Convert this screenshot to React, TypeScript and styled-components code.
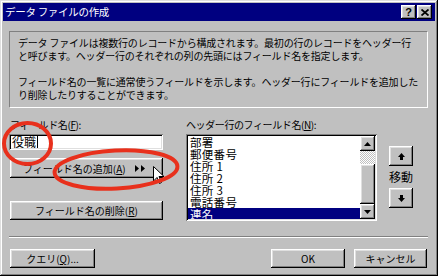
import React from 'react';
import styled, { createGlobalStyle } from 'styled-components';

const GlobalStyle = createGlobalStyle`
  html, body {
    margin: 0;
    padding: 0;
    background: #c0c0c0;
  }
  body {
    font-family: "Noto Sans CJK JP", "Noto Sans", sans-serif;
    color: #000;
  }
`;

const raised = `
  box-shadow: inset -1px -1px #000, inset 1px 1px #fff, inset -2px -2px #808080, inset 2px 2px #dfdfdf;
`;

const sunken = `
  box-shadow: inset 1px 1px #808080, inset -1px -1px #fff, inset 2px 2px #000, inset -2px -2px #dfdfdf;
`;

const listItems = ['部署', '郵便番号', '住所 1', '住所 2', '住所 3', '電話番号', '連名'];

const UpArrow = () => (
    <svg width="7" height="7" viewBox="0 0 7 7">
        <polygon points="3.5,0 7,4 0,4" fill="#000" />
        <rect x="2" y="4" width="3" height="3" fill="#000" />
    </svg>
);

const DownArrow = () => (
    <svg width="7" height="7" viewBox="0 0 7 7">
        <rect x="2" y="0" width="3" height="3" fill="#000" />
        <polygon points="0,3 7,3 3.5,7" fill="#000" />
    </svg>
);

const App = () => {
    return (
        <>
            <GlobalStyle />
            <Window>
                <TitleBar>
                    <TitleText>データ ファイルの作成</TitleText>
                    <TitleButtons>
                        <TitleButton><HelpGlyph>?</HelpGlyph></TitleButton>
                        <TitleButton>
                            <svg width="8" height="7" viewBox="0 0 8 7">
                                <path d="M0.5 0.5 L7.5 6.5 M7.5 0.5 L0.5 6.5" stroke="#000" strokeWidth="1.8" />
                            </svg>
                        </TitleButton>
                    </TitleButtons>
                </TitleBar>

                <Content>
                    <InfoPanel>
                        <InfoLine>データ ファイルは複数行のレコードから構成されます。最初の行のレコードをヘッダー行</InfoLine>
                        <InfoLine>と呼びます。ヘッダー行のそれぞれの列の先頭にはフィールド名を指定します。</InfoLine>
                        <InfoLine>&nbsp;</InfoLine>
                        <InfoLine>フィールド名の一覧に通常使うフィールドを示します。ヘッダー行にフィールドを追加した</InfoLine>
                        <InfoLine>り削除したりすることができます。</InfoLine>
                    </InfoPanel>

                    <Main>
                        <LeftColumn>
                            <FieldLabel>フィールド名(<u>F</u>):</FieldLabel>
                            <TextField>役職<Caret /></TextField>
                            <PushButton $height={20} $mt={8} $align="flex-start">
                                <span>フィールド名の追加(<u>A</u>)</span>
                                <svg width="11" height="7" viewBox="0 0 11 7">
                                    <polygon points="0,0 4,3.5 0,7" fill="#000" />
                                    <polygon points="6,0 10,3.5 6,7" fill="#000" />
                                </svg>
                            </PushButton>
                            <PushButton $height={19} $mt={23}>
                                <span>フィールド名の削除(<u>R</u>)</span>
                            </PushButton>
                        </LeftColumn>

                        <RightColumn>
                            <FieldLabel>ヘッダー行のフィールド名(<u>N</u>):</FieldLabel>
                            <ListBox>
                                <ListItems>
                                    {listItems.map((item, i) => (
                                        <ListItem key={item} $selected={i === listItems.length - 1}>{item}</ListItem>
                                    ))}
                                </ListItems>
                                <ScrollBar>
                                    <ScrollButton><svg width="7" height="4" viewBox="0 0 7 4"><polygon points="3.5,0 7,4 0,4" fill="#000" /></svg></ScrollButton>
                                    <ScrollTrack />
                                    <ScrollThumb />
                                    <ScrollButton><svg width="7" height="4" viewBox="0 0 7 4"><polygon points="0,0 7,0 3.5,4" fill="#000" /></svg></ScrollButton>
                                </ScrollBar>
                            </ListBox>
                        </RightColumn>

                        <MoveColumn>
                            <MoveButton><UpArrow /></MoveButton>
                            <MoveLabel>移動</MoveLabel>
                            <MoveButton><DownArrow /></MoveButton>
                        </MoveColumn>
                    </Main>

                    <Separator />

                    <BottomRow>
                        <DialogButton $width={85}>クエリ(<u>Q</u>)...</DialogButton>
                        <RightButtons>
                            <DialogButton $width={74}>OK</DialogButton>
                            <DialogButton $width={73}>キャンセル</DialogButton>
                        </RightButtons>
                    </BottomRow>
                </Content>

                {/* annotation marks drawn over the dialog */}
                <Overlay width="438" height="276" viewBox="0 0 438 276">
                    <path
                        d="M153.5 166.5 L153.5 181 L157 177.5 L159.5 183.5 L161.5 182.5 L159 176.5 L164 176.5 Z"
                        fill="#fff"
                        stroke="#000"
                        strokeWidth="1"
                    />
                    <ellipse cx="27.5" cy="143.5" rx="23.5" ry="20.5" fill="none" stroke="#e8301c" strokeWidth="4" />
                    <ellipse cx="116" cy="169.5" rx="61.5" ry="19" fill="none" stroke="#e8301c" strokeWidth="4" transform="rotate(-3 116 169.5)" />
                </Overlay>
            </Window>
        </>
    );
};

export default App;

const Window = styled.div`
    position: relative;
    width: 438px;
    height: 276px;
    box-sizing: border-box;
    padding: 3px;
    background: #c0c0c0;
    box-shadow: inset -1px -1px #000, inset 1px 1px #dfdfdf, inset -2px -2px #808080, inset 2px 2px #fff;
    overflow: hidden;
`;

const TitleBar = styled.div`
    height: 18px;
    background: #000080;
    display: flex;
    align-items: center;
    padding: 0 3px 0 2px;
`;

const TitleText = styled.div`
    color: #fff;
    font-size: 10.5px;
    line-height: 18px;
    white-space: nowrap;
    letter-spacing: -0.3px;
`;

const TitleButtons = styled.div`
    margin-left: auto;
    display: flex;
    gap: 1px;
`;

const TitleButton = styled.div`
    width: 15px;
    height: 14px;
    background: #c0c0c0;
    ${raised}
    display: flex;
    align-items: center;
    justify-content: center;
`;

const HelpGlyph = styled.span`
    font-family: "Liberation Sans", Arial, sans-serif;
    font-weight: bold;
    font-size: 11px;
    line-height: 11px;
`;

const Content = styled.div`
    padding: 10px 7px 0 6px;
    display: flex;
    flex-direction: column;
`;

const InfoPanel = styled.div`
    height: 77px;
    box-sizing: border-box;
    border-top: 1px solid #808080;
    border-left: 1px solid #808080;
    border-bottom: 1px solid #fff;
    border-right: 1px solid #fff;
    padding: 4px 0 0 8px;
`;

const InfoLine = styled.div`
    font-size: 10px;
    line-height: 13px;
    height: 13px;
    white-space: nowrap;
    letter-spacing: -0.2px;
`;

const Main = styled.div`
    display: flex;
    margin-top: 10px;
    margin-left: 1px;
`;

const LeftColumn = styled.div`
    width: 153px;
    display: flex;
    flex-direction: column;
`;

const RightColumn = styled.div`
    width: 191px;
    margin-left: 23px;
    display: flex;
    flex-direction: column;
`;

const FieldLabel = styled.div`
    font-size: 10px;
    line-height: 13px;
    height: 13px;
    white-space: nowrap;
    letter-spacing: -0.4px;
`;

const TextField = styled.div`
    margin-top: 3px;
    margin-left: -1px;
    width: 154px;
    height: 16px;
    box-sizing: border-box;
    background: #fff;
    ${sunken}
    padding: 0 3px;
    font-size: 12px;
    line-height: 16px;
    display: flex;
    align-items: center;
`;

const Caret = styled.span`
    display: inline-block;
    width: 1px;
    height: 12px;
    background: #000;
    margin-left: 1px;
`;

const PushButton = styled.div<{ $height: number; $mt: number; $align?: string }>`
    margin-top: ${p => p.$mt}px;
    height: ${p => p.$height}px;
    box-sizing: border-box;
    background: #c0c0c0;
    ${raised}
    display: flex;
    align-items: center;
    justify-content: ${p => p.$align ?? 'center'};
    padding-left: ${p => (p.$align ? '13px' : '0')};
    gap: 9px;
    font-size: 10px;
    white-space: nowrap;
`;

const ListBox = styled.div`
    margin-top: 3px;
    height: 87px;
    box-sizing: border-box;
    background: #fff;
    ${sunken}
    padding: 2px;
    display: flex;
`;

const ListItems = styled.div`
    flex: 1;
    overflow: hidden;
`;

const ListItem = styled.div<{ $selected?: boolean }>`
    height: 12px;
    font-size: 11.5px;
    line-height: 12px;
    padding-left: 2px;
    white-space: nowrap;
    letter-spacing: 0.3px;
    background: ${p => (p.$selected ? '#000080' : 'transparent')};
    color: ${p => (p.$selected ? '#fff' : '#000')};
`;

const ScrollBar = styled.div`
    width: 15px;
    display: flex;
    flex-direction: column;
`;

const ScrollButton = styled.div`
    height: 15px;
    flex-shrink: 0;
    background: #c0c0c0;
    ${raised}
    display: flex;
    align-items: center;
    justify-content: center;
`;

const ScrollTrack = styled.div`
    height: 13px;
    background-color: #fff;
    background-image: repeating-conic-gradient(#c0c0c0 0 25%, #fff 0 50%);
    background-size: 2px 2px;
`;

const ScrollThumb = styled.div`
    flex: 1;
    background: #c0c0c0;
    ${raised}
`;

const MoveColumn = styled.div`
    margin-left: 12px;
    width: 25px;
    padding-top: 28px;
    display: flex;
    flex-direction: column;
    align-items: flex-start;
`;

const MoveButton = styled.div`
    width: 24px;
    height: 20px;
    box-sizing: border-box;
    background: #c0c0c0;
    ${raised}
    display: flex;
    align-items: center;
    justify-content: center;
`;

const MoveLabel = styled.div`
    height: 22px;
    line-height: 22px;
    font-size: 12px;
    white-space: nowrap;
`;

const Separator = styled.div`
    margin-top: 15px;
    height: 0;
    border-top: 1px solid #808080;
    border-bottom: 1px solid #fff;
`;

const BottomRow = styled.div`
    margin-top: 11px;
    margin-left: 1px;
    margin-right: 1px;
    display: flex;
    align-items: center;
`;

const RightButtons = styled.div`
    margin-left: auto;
    display: flex;
    gap: 9px;
`;

const DialogButton = styled.div<{ $width: number }>`
    width: ${p => p.$width}px;
    height: 19px;
    box-sizing: border-box;
    background: #c0c0c0;
    ${raised}
    display: flex;
    align-items: center;
    justify-content: center;
    font-size: 10px;
    white-space: nowrap;
`;

const Overlay = styled.svg`
    position: absolute;
    left: 0;
    top: 0;
    pointer-events: none;
`;
